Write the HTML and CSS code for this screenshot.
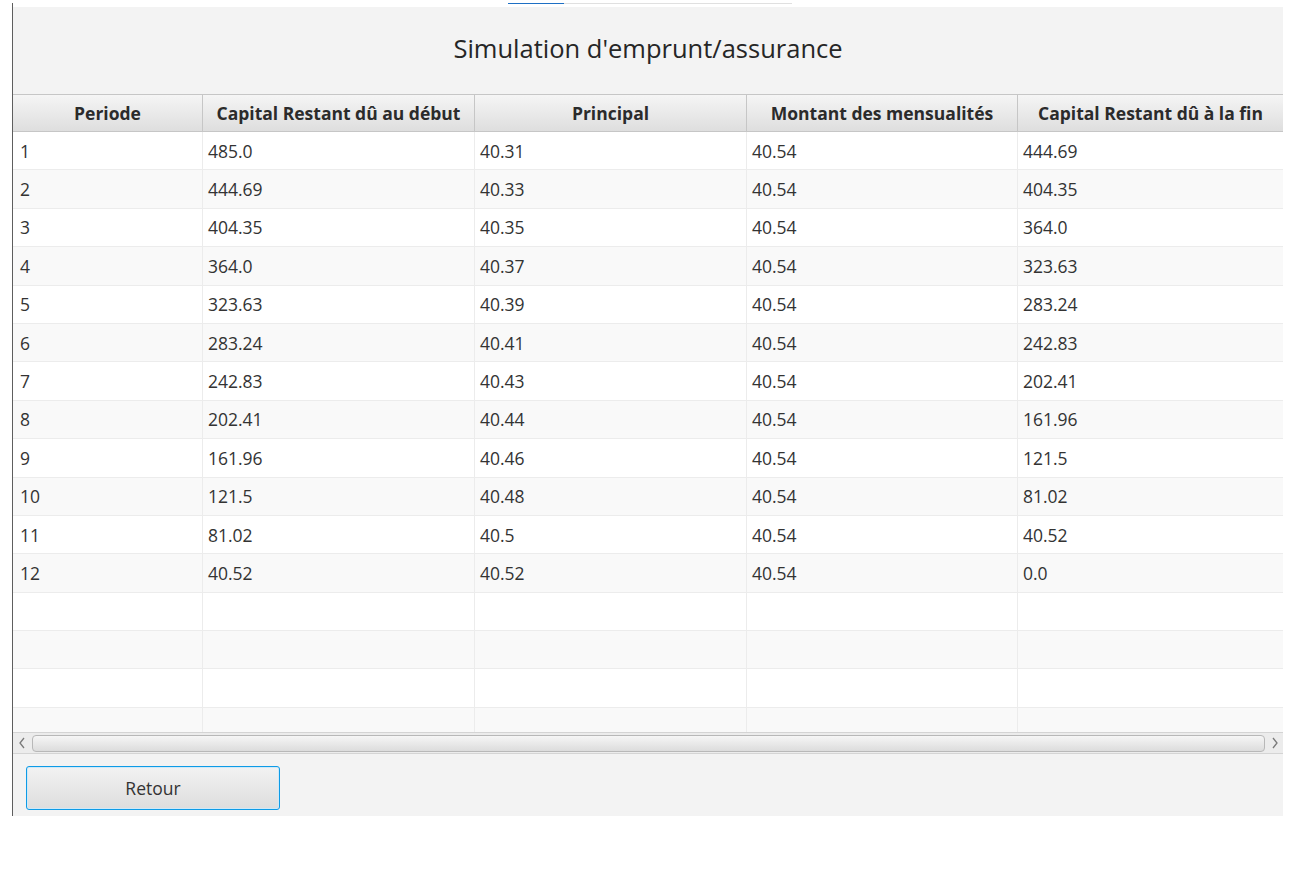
FILE: index.html
```html
<!DOCTYPE html>
<html lang="fr">
<head>
<meta charset="utf-8">
<title>Simulation d'emprunt/assurance</title>
<link rel="stylesheet" href="styles.css">
</head>
<body>
<div class="frame">
  <div class="tabs"><div class="tabline"><div class="tabline-active"></div></div></div>
  <div class="window">
    <div class="title">Simulation d'emprunt/assurance</div>
    <div class="table">
      <div class="row head">
        <div class="cell">Periode</div>
        <div class="cell">Capital Restant dû au début</div>
        <div class="cell">Principal</div>
        <div class="cell">Montant des mensualités</div>
        <div class="cell">Capital Restant dû à la fin</div>
      </div>
      <div class="body">
        <div class="row"><div class="cell">1</div><div class="cell">485.0</div><div class="cell">40.31</div><div class="cell">40.54</div><div class="cell">444.69</div></div>
        <div class="row"><div class="cell">2</div><div class="cell">444.69</div><div class="cell">40.33</div><div class="cell">40.54</div><div class="cell">404.35</div></div>
        <div class="row"><div class="cell">3</div><div class="cell">404.35</div><div class="cell">40.35</div><div class="cell">40.54</div><div class="cell">364.0</div></div>
        <div class="row"><div class="cell">4</div><div class="cell">364.0</div><div class="cell">40.37</div><div class="cell">40.54</div><div class="cell">323.63</div></div>
        <div class="row"><div class="cell">5</div><div class="cell">323.63</div><div class="cell">40.39</div><div class="cell">40.54</div><div class="cell">283.24</div></div>
        <div class="row"><div class="cell">6</div><div class="cell">283.24</div><div class="cell">40.41</div><div class="cell">40.54</div><div class="cell">242.83</div></div>
        <div class="row"><div class="cell">7</div><div class="cell">242.83</div><div class="cell">40.43</div><div class="cell">40.54</div><div class="cell">202.41</div></div>
        <div class="row"><div class="cell">8</div><div class="cell">202.41</div><div class="cell">40.44</div><div class="cell">40.54</div><div class="cell">161.96</div></div>
        <div class="row"><div class="cell">9</div><div class="cell">161.96</div><div class="cell">40.46</div><div class="cell">40.54</div><div class="cell">121.5</div></div>
        <div class="row"><div class="cell">10</div><div class="cell">121.5</div><div class="cell">40.48</div><div class="cell">40.54</div><div class="cell">81.02</div></div>
        <div class="row"><div class="cell">11</div><div class="cell">81.02</div><div class="cell">40.5</div><div class="cell">40.54</div><div class="cell">40.52</div></div>
        <div class="row"><div class="cell">12</div><div class="cell">40.52</div><div class="cell">40.52</div><div class="cell">40.54</div><div class="cell">0.0</div></div>
        <div class="row"><div class="cell"></div><div class="cell"></div><div class="cell"></div><div class="cell"></div><div class="cell"></div></div>
        <div class="row"><div class="cell"></div><div class="cell"></div><div class="cell"></div><div class="cell"></div><div class="cell"></div></div>
        <div class="row"><div class="cell"></div><div class="cell"></div><div class="cell"></div><div class="cell"></div><div class="cell"></div></div>
        <div class="row"><div class="cell"></div><div class="cell"></div><div class="cell"></div><div class="cell"></div><div class="cell"></div></div>
      </div>
      <div class="hscroll">
        <svg class="arrow" width="10" height="22" viewBox="0 0 10 22"><path d="M7 6 L3 11 L7 16" fill="none" stroke="#7a7a7a" stroke-width="1.3"/></svg>
        <div class="thumb"></div>
        <svg class="arrow" width="10" height="22" viewBox="0 0 10 22"><path d="M3 6 L7 11 L3 16" fill="none" stroke="#7a7a7a" stroke-width="1.3"/></svg>
      </div>
    </div>
    <div class="footer">
      <button class="btn">Retour</button>
    </div>
  </div>
</div>
</body>
</html>
```

FILE: styles.css
```css
html, body {
  margin: 0;
  padding: 0;
  background: #ffffff;
}
body {
  font-family: "Open Sans", "Noto Sans", sans-serif;
  color: #333333;
}
.frame {
  margin-left: 12px;
  margin-top: 3px;
  width: 1270px;
  border-left: 1px solid #5e5e5e;
}
.tabs {
  height: 4px;
  background: #ffffff;
}
.tabline {
  margin-left: 495px;
  width: 284px;
  height: 1px;
  background: #e0e0e0;
}
.tabline-active {
  width: 56px;
  height: 1px;
  background: #1d6fc4;
}
.window {
  background: #f3f3f3;
  height: 809px;
  display: flex;
  flex-direction: column;
}
.title {
  flex-shrink: 0;
  height: 87px;
  display: flex;
  align-items: center;
  justify-content: center;
  font-size: 25.5px;
  color: #262626;
  padding-bottom: 5px;
  box-sizing: border-box;
}
.table {
  flex-shrink: 0;
  border-top: 1px solid #c6c6c6;
  background: #ffffff;
}
.row {
  display: grid;
  grid-template-columns: 190px 272px 272px 271px 265px;
  height: 38.4px;
  box-sizing: border-box;
  border-bottom: 1px solid #ececec;
}
.row .cell {
  border-right: 1px solid #ececec;
  display: flex;
  align-items: center;
  padding-left: 5px;
  font-size: 17.5px;
  color: #333333;
  overflow: hidden;
  white-space: nowrap;
}
.row .cell:first-child {
  padding-left: 7px;
}
.row .cell:last-child {
  border-right: none;
}
.row.head {
  height: 37px;
  background: linear-gradient(#f5f5f5, #dedede);
  border-bottom: 1px solid #c6c6c6;
}
.row.head .cell {
  border-right: 1px solid #c6c6c6;
  justify-content: center;
  padding-left: 0;
  font-weight: 700;
  font-size: 17.5px;
  color: #2b2b2b;
}
.row.head .cell:last-child {
  border-right: none;
}
.body {
  height: 600px;
  overflow: hidden;
}
.body .row:nth-child(even) {
  background: #f9f9f9;
}
.hscroll {
  height: 22px;
  box-sizing: border-box;
  border-top: 1px solid #d4d4d4;
  border-bottom: 1px solid #d4d4d4;
  background: #ececec;
  display: flex;
  align-items: center;
  padding: 0 3px 0 4px;
  gap: 5px;
}
.thumb {
  flex: 1;
  height: 15px;
  border: 1px solid #b8b8b8;
  border-radius: 4px;
  background: linear-gradient(#f6f6f6, #dcdcdc);
}
.arrow {
  display: block;
}
.footer {
  flex: 1;
  padding: 12px 13px 0;
  background: #f3f3f3;
}
.btn {
  width: 254px;
  height: 44px;
  border: 1px solid #0e9be6;
  border-radius: 3px;
  background: linear-gradient(#f2f2f2, #dddddd);
  font-family: "Open Sans", "Noto Sans", sans-serif;
  font-size: 17.5px;
  color: #333333;
  box-shadow: inset 0 0 0 1px #cfe9f8;
}
```
